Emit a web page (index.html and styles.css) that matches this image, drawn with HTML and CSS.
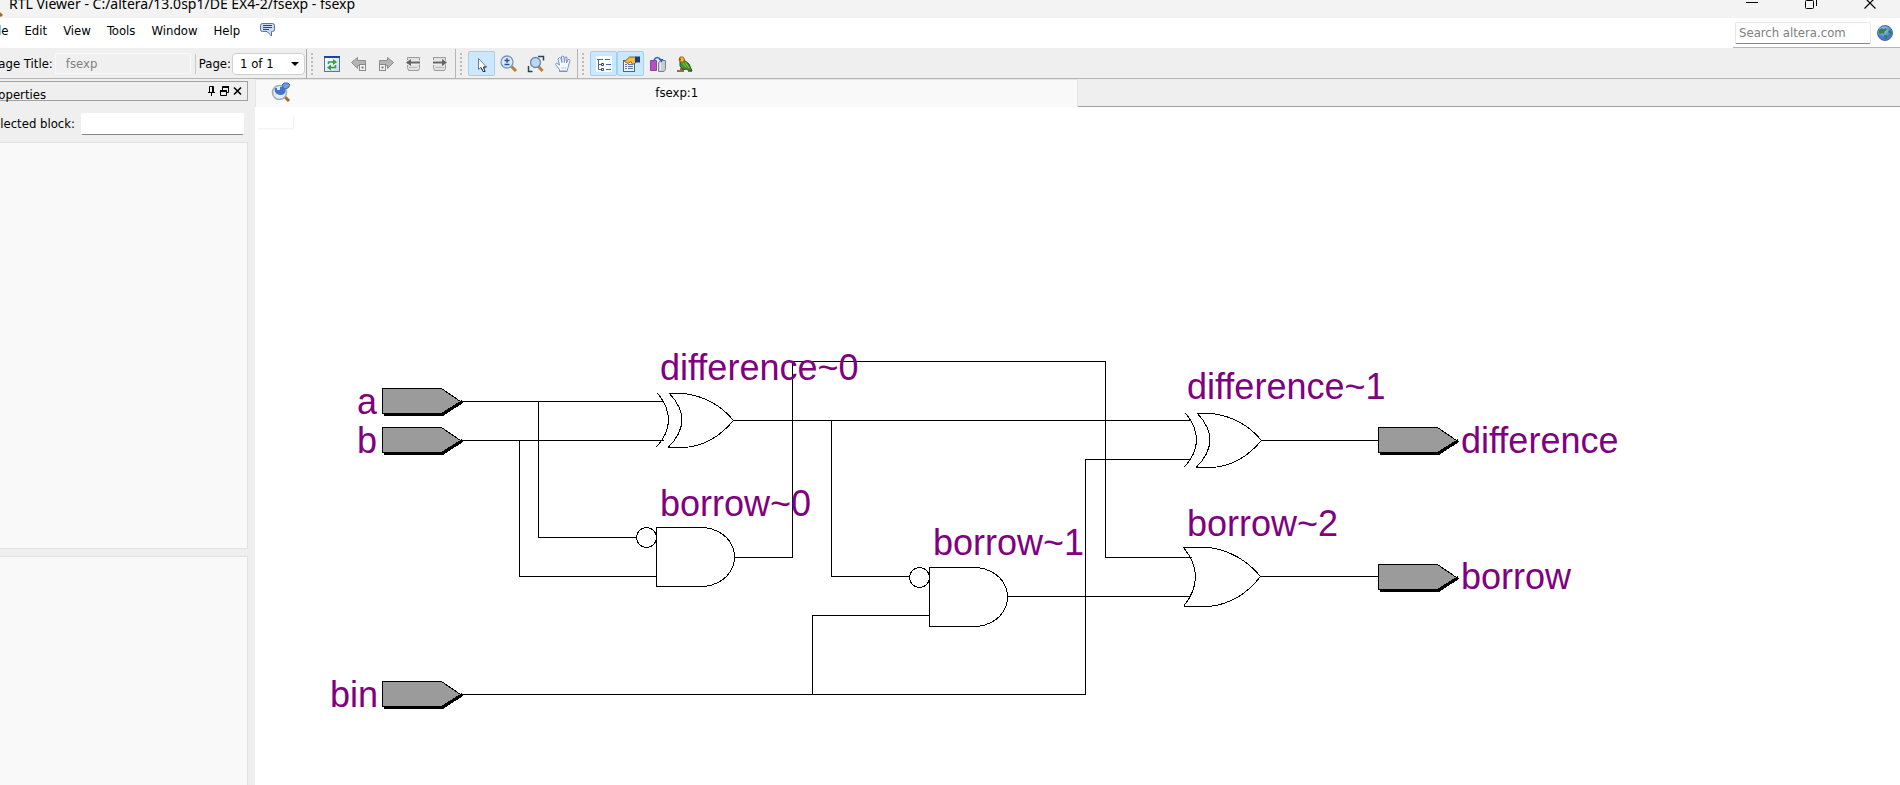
FILE: index.html
```html
<!DOCTYPE html>
<html lang="en">
<head>
<meta charset="utf-8">
<title>RTL Viewer - C:/altera/13.0sp1/DE EX4-2/fsexp - fsexp</title>
<link rel="stylesheet" href="styles.css">
</head>
<body>
<div class="window">
  <header class="titlebar">
    <svg class="app-icon" width="16" height="16" viewBox="0 0 16 16"><circle cx="6" cy="6" r="5" fill="#c9def5" stroke="#7d93b5"/><path d="M9 9l6 6" stroke="#a8691d" stroke-width="3"/></svg>
    <h1 class="title">RTL Viewer - C:/altera/13.0sp1/DE EX4-2/fsexp - fsexp</h1>
    <div class="caption-buttons">
      <button class="caption" aria-label="Minimize"><svg width="14" height="14" viewBox="0 0 14 14"><path d="M1 6.500h12" stroke="#000"/></svg></button>
      <button class="caption" aria-label="Restore"><svg width="14" height="14" viewBox="0 0 14 14"><rect x="1.500" y="4.500" width="8" height="8" rx="1" fill="none" stroke="#000"/><path d="M4 1.500h7q1.500 0 1.500 1.500v7" fill="none" stroke="#000"/></svg></button>
      <button class="caption" aria-label="Close"><svg width="14" height="14" viewBox="0 0 14 14"><path d="M1.500 1.500l11 11M12.500 1.500l-11 11" stroke="#000" stroke-width="1.200"/></svg></button>
    </div>
  </header>

  <div class="menubar">
    <nav class="menus">
      <button class="menu">File</button>
      <button class="menu">Edit</button>
      <button class="menu">View</button>
      <button class="menu">Tools</button>
      <button class="menu">Window</button>
      <button class="menu">Help</button>
      <button class="menu" aria-label="Feedback"><svg width="15" height="14" viewBox="0 0 15 14"><path d="M2.500.5h10q2 0 2 2v4q0 2-2 2h-1v4.500l-4.500-4.500h-4.500q-2 0-2-2v-4q0-2 2-2z" fill="#c8dcf6" stroke="#5b7397"/><path d="M3 2.500h9M3 4.500h9M3 6.500h6" stroke="#33465f"/></svg></button>
    </nav>
    <form class="search">
      <input class="search-box" type="text" placeholder="Search altera.com" aria-label="Search altera.com">
      <button class="globe" type="button" aria-label="Search"><svg width="16" height="16" viewBox="0 0 16 16"><defs><radialGradient id="sea" cx=".4" cy=".3"><stop offset="0" stop-color="#b9d2fb"/><stop offset="1" stop-color="#4a76cf"/></radialGradient></defs><circle cx="8" cy="8" r="7.500" fill="url(#sea)" stroke="#4767b4"/><path d="M2 5l3-2 1 1 3-1 1 2-2 1-1 3-2-1-2 1-1-1zM7 10l3 0 0 3-1 2-1-2zM12 5l2 1 1 3-2 0-1-1-1-1z" fill="#2f8743"/></svg></button>
    </form>
  </div>

  <div class="toolbar">
    <div class="page-fields">
      <label class="page-title-label" for="page-title">Page Title:</label>
      <input class="page-title" id="page-title" type="text" value="fsexp" disabled>
      <span class="divider"></span>
      <label for="page">Page:</label>
      <span class="select-wrap">
        <select class="page-select" id="page"><option>1 of 1</option></select>
        <svg class="arrow" width="8" height="4" viewBox="0 0 8 4"><path d="M0 0h8l-4 4z"/></svg>
      </span>
    </div>
    <div class="tools tools-nav">
      <span class="grip"></span>
      <button class="tool" aria-label="Refresh"><svg width="16" height="16" viewBox="0 0 16 16"><defs><linearGradient id="sheet" x2="1" y2="1"><stop offset="0" stop-color="#fff"/><stop offset="1" stop-color="#c5d8f3"/></linearGradient></defs><rect x=".5" y=".5" width="15" height="15" fill="url(#sheet)" stroke="#5873a9"/><path d="M0 1h16" stroke="#1b459e" stroke-width="2"/><path d="M4.500 8v-2h5.500M11.500 9v2.500h-5.500" fill="none" stroke="#3b9c39" stroke-width="1.500"/><path d="M9 3l4 3-4 3zM7 8.500l-4 3 4 3z" fill="#3b9c39"/></svg></button>
      <button class="tool" aria-label="Back"><svg width="16" height="16" viewBox="0 0 16 16"><path d="M.5 6.500l6-5v3h8v5h-8v3z" fill="#b5b5b5" stroke="#8d8d8d"/><rect x="8.500" y="8.500" width="6" height="6" fill="#f4f4f4" stroke="#888"/><path d="M10.500 10.500h2v2h-2z" fill="#777"/></svg></button>
      <button class="tool" aria-label="Forward"><svg width="16" height="16" viewBox="0 0 16 16"><path d="M15.500 6.500l-6-5v3h-8v5h8v3z" fill="#b5b5b5" stroke="#8d8d8d"/><rect x="1.500" y="8.500" width="6" height="6" fill="#f4f4f4" stroke="#888"/><path d="M3.500 10.500h2v2h-2z" fill="#777"/></svg></button>
      <button class="tool" aria-label="Previous page"><svg width="16" height="16" viewBox="0 0 16 16"><path d="M2.500 4v-2.500h12v3M2.500 9v2.500l1 3h10l1-2v-4" fill="#e2e2e2" stroke="#9b9b9b"/><path d="M4 11.500h8" stroke="#bbb"/><path d="M2 6.500h13" stroke="#666" stroke-width="2"/><path d="M6 3v7l-5-3.500z" fill="#666"/></svg></button>
      <button class="tool" aria-label="Next page"><svg width="16" height="16" viewBox="0 0 16 16"><path d="M1.500 4v-2.500h12v3M1.500 9v2.500l1 3h10l1-2v-4" fill="#e2e2e2" stroke="#9b9b9b"/><path d="M4 11.500h8" stroke="#bbb"/><path d="M1 6.500h12" stroke="#666" stroke-width="2"/><path d="M10 3v7l5-3.500z" fill="#666"/></svg></button>
    </div>
    <div class="tools tools-mouse">
      <span class="grip"></span>
      <button class="tool on" aria-label="Selection tool" aria-pressed="true"><svg width="16" height="16" viewBox="0 0 16 16"><path d="M4.500 2.500v11l2.500-2 2 4h2l-1.500-4.500h3z" fill="#fff" stroke="#6b7c94"/><path d="M7 11.500l2 4h2l-1.500-4.500h3" fill="none" stroke="#26374f"/></svg></button>
      <button class="tool" aria-label="Zoom tool"><svg width="18" height="18" viewBox="0 0 18 18"><path d="M11.500 11.500l4.500 4.500" stroke="#c07b3d" stroke-width="3"/><circle cx="7" cy="7" r="6" fill="#dceafa" stroke="#7896be" stroke-width="1.300"/><path d="M4.500 5.500h5M7 3v5M4.500 9.500h5" stroke="#2150ad" stroke-width="1.300"/></svg></button>
      <button class="tool" aria-label="Fit in window"><svg width="18" height="18" viewBox="0 0 18 18"><path d="M11 1.500h5.500v4M1.500 11v5.500h4" fill="none" stroke="#294463" stroke-width="1.500"/><path d="M11.500 11.500l4 4.500" stroke="#c07b3d" stroke-width="3"/><circle cx="8.500" cy="7.500" r="5" fill="#b9d7f6" stroke="#7189a8" stroke-width="1.300"/></svg></button>
      <button class="tool" aria-label="Hand tool"><svg width="18" height="18" viewBox="0 0 18 18"><path d="M5.500 16.500v-2l-4-5 1-1.500 3 2-1.500-6 1.500-1.500 1.500 1 1 4-.5-6 1.500-.5 1 1 .5 5.500.5-5.500 1.500 0 .5 1-.5 5 1.500-3.500 1.500 0 .5 1-2 7-1 4z" fill="#f4f8ff" stroke="#7893c2"/><path d="M6 15.500h7.500M7 13h5" stroke="#b7c8e4"/></svg></button>
    </div>
    <div class="tools tools-view">
      <span class="grip"></span>
      <button class="tool on" aria-label="Hierarchy list" aria-pressed="true"><svg width="16" height="16" viewBox="0 0 16 16"><path fill="#fff" d="M0 0h16v16h-16z"/><path d="M1 3.500h6M2.500 4v9.500h3M3 8.500h3" stroke="#4f6481" fill="none"/><path d="M9 3.500h5M10 8.500h5M10 13.500h5" stroke="#3868c2"/><path fill="#fff" stroke="#38495f" d="M5.500 7.500h2v2h-2zM5.500 12.500h2v2h-2z"/></svg></button>
      <button class="tool on" aria-label="Properties" aria-pressed="true"><svg width="18" height="17" viewBox="0 0 18 17"><rect x="1.500" y="5.500" width="11" height="11" fill="#edf4ff" stroke="#4c6690"/><path d="M3 9.500h2M6 9.500h5M3 11.500h2M6 11.500h5M3 13.500h2M6 13.500h5" stroke="#5578b4"/><path d="M2.500 6.500l5-4.500h6v6l-3 1.500-1.500-3-3 2z" fill="#f4bd37" stroke="#92651c"/><path d="M13 1.500h5v6h-5z" fill="#173d86"/></svg></button>
      <button class="tool" aria-label="Partition"><svg width="16" height="16" viewBox="0 0 16 16"><path d="M.5 4.500h6v10h-6z" fill="#bd4bc8" stroke="#7851a0"/><path d="M8.500 6.500l2-2h5v9l-1.500 2h-5.500z" fill="#c9cdd1" stroke="#7d858c"/><path d="M4 4q3-5 7 0" fill="none" stroke="#2c62c3" stroke-width="1.600"/><path d="M8.500 3h5l-2 3.500z" fill="#2c62c3"/><path d="M10.500 7v7" stroke="#eee"/></svg></button>
      <button class="tool" aria-label="Bird's eye view"><svg width="16" height="16" viewBox="0 0 16 16"><path d="M3 5l4-1 5 4 3 7-4-1-2-1-3 1-3-4z" fill="#3c9435" stroke="#1d5620"/><path d="M3 1h3l1.500 2-1 3-3 0-1.500-2z" fill="#f0be22" stroke="#9b6913"/><path d="M2 3.500h2" stroke="#c73b25" stroke-width="2"/><path d="M6 7l3 4M8 6l4 6" stroke="#98cd36"/><path d="M0 15h7M3 13l4 0M11 15h4" stroke="#76471d" stroke-width="1.500"/></svg></button>
    </div>
  </div>

  <div class="workspace">
    <aside class="dock">
      <div class="dock-header">
        <h2 class="dock-title">Properties</h2>
        <button class="dock-button" aria-label="Auto hide"><svg width="9" height="10" viewBox="0 0 9 10"><path d="M2.500 6v-5.500h4v5.500M1 6.500h7M4.500 7v3M5.500 1v5" fill="none" stroke="#000"/></svg></button>
        <button class="dock-button" aria-label="Float"><svg width="9" height="10" viewBox="0 0 9 10"><path d="M2.500 4v-3h6v5.500h-2" fill="none" stroke="#000"/><path d="M2 1h7M0 5h7" stroke="#000" stroke-width="2"/><path d="M.5 5v4.500h6v-4.500" fill="none" stroke="#000"/></svg></button>
        <button class="dock-button" aria-label="Close panel"><svg width="9" height="10" viewBox="0 0 9 10"><path d="M1 1.500l7 7M8 1.500l-7 7" stroke="#000" stroke-width="1.600"/></svg></button>
      </div>
      <div class="block-row">
        <label for="block">Selected block:</label>
        <input class="block-box" id="block" type="text">
      </div>
      <div class="pane pane-top"></div>
      <div class="pane pane-bottom"></div>
    </aside>

    <main class="editor">
      <div class="tabs">
        <button class="tab">
          <svg width="20" height="20" viewBox="0 0 20 20"><path d="M13 14l5 5" stroke="#a8691d" stroke-width="3"/><circle cx="8.500" cy="10.500" r="7" fill="#e4edf7" stroke="#9eaebb" stroke-width="1.600"/><path d="M4 6h2v2h3v-3h4q3 4 0 7-3 2-7 0-3-2-2-6z" fill="#4373cd"/><path d="M11 3l2-2h4l2 2-2 3-4 1z" fill="#6e99e3" stroke="#4169b4"/></svg>
          <span class="tab-name">fsexp:1</span>
        </button>
        <div class="tab-rest"></div>
      </div>
      <div class="canvas">
        <svg class="schematic" role="img" aria-label="fsexp schematic">
          <defs>
            <g id="pin">
              <path d="M2 26.500h58.500l20-13" fill="none" stroke="#000" stroke-width="3"/>
              <path d="M.5.5h59l19 13-19 12h-59z" fill="#9b9b9b" stroke="#000"/>
            </g>
            <g id="and" class="line">
              <path d="M.5.5h48C68 3 78.500 16 78.500 30S68 57 48.500 59.500h-48z"/>
              <ellipse cx="-9.500" cy="10.500" rx="10" ry="10"/>
            </g>
            <g id="xor" class="line">
              <path d="M1.500 0Q24 28 .5 54M13.500.5Q39 28 12 54.500M13.500.5h14Q58 4 77.500 27.500Q56 53 28 54.500h-16"/>
            </g>
          </defs>
          <g transform="translate(-255 -107)">
            <g class="line">
              <path d="M461 401.500h203M461 440.500h203M538.500 401.500v136h98M519.500 440.500v136h137"/>
              <path d="M735 557.500h57.500v-196h313v196h86M733 420.500h457M831.500 420.500v156h78"/>
              <path d="M461 694.500h624.500v-235h105M812.500 694.500v-79h117M1008 596.500h183M1261 440.500h117M1261 576.500h117"/>
              <path d="M1183.500 547.500q24 29 0 59M1183.500 547.500h26Q1240 552 1260.500 576.500Q1240 603 1209.500 606.500h-26"/>
            </g>
            <use href="#xor" x="656" y="393"/>
            <use href="#xor" x="1184" y="413"/>
            <use href="#and" x="656" y="527"/>
            <use href="#and" x="929" y="567"/>
            <use href="#pin" x="382" y="388"/>
            <use href="#pin" x="382" y="427"/>
            <use href="#pin" x="382" y="681"/>
            <use href="#pin" x="1378" y="427"/>
            <use href="#pin" x="1378" y="564"/>
            <g class="names">
              <text x="357" y="414">a</text>
              <text x="357" y="453">b</text>
              <text x="330" y="707">bin</text>
              <text x="660" y="380">difference~0</text>
              <text x="660" y="516">borrow~0</text>
              <text x="933" y="555">borrow~1</text>
              <text x="1187" y="399">difference~1</text>
              <text x="1187" y="536">borrow~2</text>
              <text x="1461" y="453">difference</text>
              <text x="1461" y="589">borrow</text>
            </g>
          </g>
        </svg>
        <div class="ghost"></div>
      </div>
    </main>
  </div>
</div>
</body>
</html>
```
FILE: styles.css
```css
* { box-sizing: border-box; }

body {
  margin: 0;
  overflow: hidden;
  background: #fff;
  color: #000;
  font: 13px/18px "DejaVu Sans Condensed", "Noto Sans", sans-serif;
}

button {
  padding: 0;
  border: 0;
  background: none;
  color: inherit;
  font: inherit;
}

input, select {
  margin: 0;
  font: inherit;
}

svg { display: block; }

/* The window runs past the top and left edges of the screen. */
.window {
  display: flex;
  flex-direction: column;
  height: calc(100vh + 9px);
  margin: -9px 0 0 -18px;
}

.titlebar {
  display: flex;
  flex: none;
  align-items: center;
  height: 27px;
  padding-left: 5px;
  background: #f3f3f3;
}

.app-icon { margin-top: 8px; }

.title {
  flex: 1;
  margin: 0 0 2px 6px;
  font: 14px/18px "Noto Sans", "Open Sans", sans-serif;
}

.caption-buttons { display: flex; }

.caption {
  display: flex;
  justify-content: center;
  width: 59px;
  padding-bottom: 4px;
}

.caption:last-child {
  width: 60px;
}

.menubar {
  display: flex;
  flex: none;
  justify-content: space-between;
  height: 31px;
  border-bottom: 1px solid #efefef;
}

.menus {
  display: flex;
  align-items: flex-start;
  gap: 16px;
  padding: 4px 0 0 7px;
}

.menu svg { margin: 1px 0 0 4px; }

.search {
  display: flex;
  align-items: center;
  gap: 6px;
  padding: 0 7px 0 2px;
  border-bottom: 1px solid #b5b5b5;
}

.search-box {
  width: 136px;
  height: 22px;
  padding: 0 3px;
  border: 1px solid #e6e6e6;
  border-bottom-color: #868686;
  border-radius: 2px;
}

.search-box::placeholder { color: #808080; }

.toolbar {
  display: flex;
  flex: none;
  height: 30px;
  border-bottom: 1px solid #b5b5b5;
  background: #efefef;
}

.page-fields {
  display: flex;
  align-items: center;
  justify-content: flex-end;
  width: 325px;
  border-right: 1px solid #a8a8a8;
}

.page-title {
  width: 136px;
  height: 21px;
  margin-left: 2px;
  padding: 0 10px;
  border: 1px solid #f8f8f8;
  background: #f0f0f0;
  color: #808080;
}

.page-title-label { white-space: nowrap; }

.divider {
  width: 1px;
  height: 20px;
  margin: 0 3px 0 4px;
  background: #c8c8c8;
}

.select-wrap {
  position: relative;
  margin: 0 1px 0 1px;
}

.page-select {
  display: block;
  width: 73px;
  height: 22px;
  padding: 0 7px;
  border: 1px solid #d0d0d0;
  border-radius: 4px;
  background: #fff;
  color: #000;
  appearance: none;
}

.arrow {
  position: absolute;
  top: 9px;
  right: 6px;
  pointer-events: none;
}

.tools {
  display: flex;
  align-items: center;
  padding-left: 4px;
  border-right: 1px solid #b5b5b5;
}

.tools-nav { width: 149px; }
.tools-mouse { width: 122px; }
.tools-view { border-right: 0; }

.grip {
  width: 2px;
  height: 22px;
  margin-right: 6px;
  background: repeating-linear-gradient(#bcbcbc 0 2px, transparent 2px 4px);
}

.tools-nav .grip { margin-right: 5px; }

.tool {
  display: grid;
  place-items: center;
  width: 27px;
  height: 25px;
  border: 1px solid transparent;
  border-radius: 2px;
}

.tool.on {
  border-color: #99d1ff;
  background: #cce8ff;
}

.workspace {
  display: flex;
  flex: 1;
  min-height: 0;
}

.dock {
  display: flex;
  flex: none;
  flex-direction: column;
  width: 273px;
  padding: 2px 7px 0 0;
  background: #efefef;
}

.dock-header {
  display: flex;
  flex: none;
  gap: 4px;
  height: 20px;
  padding: 4px 5px 0 0;
  border: 1px solid #a0a0a0;
}

.dock-title {
  flex: 1;
  margin: 0;
  padding-left: 4px;
  font-size: 13px;
  font-weight: 400;
  line-height: 18px;
}

.dock-button {
  display: flex;
  width: 9px;
}

.block-row {
  display: flex;
  flex: none;
  align-items: center;
  justify-content: flex-end;
  gap: 6px;
  height: 41px;
  padding: 5px 4px 0 0;
}

.block-row label { white-space: nowrap; }

.block-box {
  width: 163px;
  height: 22px;
  border: 1px solid #fff;
  border-bottom-color: #868686;
  border-radius: 2px;
}

.pane {
  border: 1px solid #e1e1e1;
  background: #f9f9f9;
}

.pane-top {
  flex: 407;
  margin-bottom: 7px;
}

.pane-bottom {
  flex: 229;
  border-bottom: 0;
}

.editor {
  display: flex;
  flex: 1;
  flex-direction: column;
  min-width: 0;
}

.tabs {
  display: flex;
  flex: none;
  height: 28px;
}

.tab {
  display: flex;
  width: 50%;
  align-items: center;
  padding: 0 14px 4px 15px;
  border: 1px solid #e5e5e5;
  border-width: 1px 1px 0 1px;
  background: #f9f9f9;
}

.tab-name {
  flex: 1;
  padding-top: 3px;
  text-align: center;
}

.tab-rest {
  flex: 1;
  border-bottom: 1px solid #a0a0a0;
  background: #efefef;
}

.canvas {
  position: relative;
  flex: 1;
  min-height: 0;
  overflow: hidden;
}

.ghost {
  position: absolute;
  top: 7px;
  left: 2px;
  width: 36px;
  height: 14px;
  box-shadow: 1px 1px 2px #eee;
}

.schematic {
  width: 100%;
  height: 100%;
  shape-rendering: crispEdges;
}

.line {
  fill: none;
  stroke: #000;
}

.names {
  fill: #800080;
  font: 36px "Liberation Sans", Arial, sans-serif;
}
```
